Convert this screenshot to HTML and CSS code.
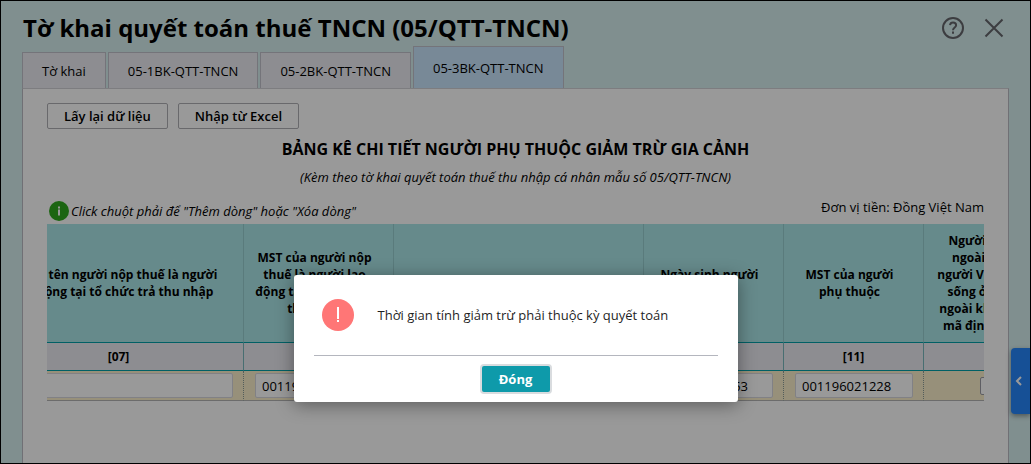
FILE: index.html
```html
<!DOCTYPE html>
<html lang="vi">
<head>
<meta charset="utf-8">
<meta name="viewport" content="width=device-width, initial-scale=1">
<title>Tờ khai quyết toán thuế TNCN</title>
<link rel="stylesheet" href="styles.css">
</head>
<body>
<div class="window">
  <header class="topbar">
    <h1 class="title">Tờ khai quyết toán thuế TNCN (05/QTT-TNCN)</h1>
    <div class="tools">
      <button class="icon-btn" type="button" aria-label="Trợ giúp">
        <svg width="24" height="24" viewBox="0 0 24 24" fill="none" stroke="currentColor" stroke-width="2"><circle cx="12" cy="12" r="10"/><path d="M9 9.200C9.300 7.300 10.500 6.600 12 6.600c1.800 0 3.100 1 3.100 2.600C15.100 11.400 12 11.500 12 14.200"/><path d="M12 15.600v2.200"/></svg>
      </button>
      <button class="icon-btn" type="button" aria-label="Đóng cửa sổ">
        <svg width="24" height="24" viewBox="0 0 24 24" fill="none" stroke="currentColor" stroke-width="2"><path d="M3.500 3.500l17 17M20.500 3.500l-17 17"/></svg>
      </button>
    </div>
  </header>

  <nav class="tabs">
    <button class="tab" type="button">Tờ khai</button>
    <button class="tab" type="button">05-1BK-QTT-TNCN</button>
    <button class="tab" type="button">05-2BK-QTT-TNCN</button>
    <button class="tab tab-active" type="button">05-3BK-QTT-TNCN</button>
  </nav>

  <main class="panel">
    <div class="actions">
      <button class="btn" type="button">Lấy lại dữ liệu</button>
      <button class="btn" type="button">Nhập từ Excel</button>
    </div>
    <h2 class="heading">BẢNG KÊ CHI TIẾT NGƯỜI PHỤ THUỘC GIẢM TRỪ GIA CẢNH</h2>
    <p class="subheading">(Kèm theo tờ khai quyết toán thuế thu nhập cá nhân mẫu số 05/QTT-TNCN)</p>
    <div class="notes">
      <p class="hint">
        <svg width="20" height="20" viewBox="0 0 20 20"><circle cx="10" cy="10" r="10" fill="#2fa81e"/><path d="M9 8.500h2v6H9zM9 5.500h2v2H9z" fill="#fff"/></svg>
        <span>Click chuột phải để "Thêm dòng" hoặc "Xóa dòng"</span>
      </p>
      <p class="unit">Đơn vị tiền: Đồng Việt Nam</p>
    </div>
    <div class="grid-clip">
      <table class="grid">
        <colgroup>
          <col class="col-name"><col class="col-tax"><col class="col-name"><col class="col-code"><col class="col-code"><col class="col-check">
        </colgroup>
        <thead>
          <tr>
            <th>Họ và tên người nộp thuế là người<br>lao động tại tổ chức trả thu nhập</th>
            <th>MST của người nộp<br>thuế là người lao<br>động tại tổ chức trả<br>thu nhập</th>
            <th></th>
            <th>Ngày sinh người<br>phụ</th>
            <th>MST của người<br>phụ thuộc</th>
            <th>Người nước<br>ngoài hoặc<br>người Việt Nam<br>sống ở nước<br>ngoài không có<br>mã định danh</th>
          </tr>
          <tr class="codes">
            <th>[07]</th><th>[08]</th><th>[09]</th><th>[10]</th><th>[11]</th><th></th>
          </tr>
        </thead>
        <tbody>
          <tr>
            <td><input class="cell" type="text" aria-label="Họ và tên người nộp thuế"></td>
            <td><input class="cell" type="text" value="001196021228" aria-label="MST của người nộp thuế"></td>
            <td><input class="cell" type="text" aria-label="Họ và tên người phụ thuộc"></td>
            <td><input class="cell cell-date" type="text" value="01/01/1953" aria-label="Ngày sinh người phụ thuộc"></td>
            <td><input class="cell" type="text" value="001196021228" aria-label="MST của người phụ thuộc"></td>
            <td><input class="check" type="checkbox" aria-label="Không có mã định danh"></td>
          </tr>
        </tbody>
      </table>
    </div>
  </main>

  <button class="drawer" type="button" aria-label="Mở bảng bên">
    <svg width="8" height="10" viewBox="0 0 8 10" fill="none" stroke="#fff" stroke-width="2"><path d="M6 1L2 5l4 4"/></svg>
  </button>

  <div class="overlay">
    <section class="dialog" role="alertdialog" aria-modal="true" aria-labelledby="message">
      <div class="dialog-body">
        <svg width="32" height="32" viewBox="0 0 32 32"><circle cx="16" cy="16" r="16" fill="#ff7676"/><path d="M15 8h2v12h-2zM15 21h2v2h-2z" fill="#fff"/></svg>
        <p id="message" class="message">Thời gian tính giảm trừ phải thuộc kỳ quyết toán</p>
      </div>
      <div class="dialog-footer">
        <button class="btn-primary" type="button">Đóng</button>
      </div>
    </section>
  </div>
</div>
</body>
</html>
```
FILE: styles.css
```css
* { box-sizing: border-box; }

body, h1, h2, p { margin: 0; }

body {
  font-family: "Open Sans", "Noto Sans", sans-serif;
  font-size: 13px;
  line-height: 18px;
  color: #000;
}

button, input { font: inherit; color: inherit; margin: 0; }

.window {
  position: relative;
  display: flex;
  flex-direction: column;
  min-height: 100vh;
  padding: 0 21px;
  border: 1px solid #000;
  background: #d6eeee;
  overflow: hidden;
}

.topbar {
  display: flex;
  align-items: center;
  justify-content: space-between;
  height: 45px;
  padding-top: 8px;
}

.title {
  padding-left: 1px;
  font-size: 24px;
  line-height: 36px;
  font-weight: 700;
  white-space: nowrap;
}

.tools { display: flex; gap: 17px; padding-right: 3px; }

.icon-btn {
  display: flex;
  padding: 0;
  border: 0;
  background: none;
  color: #65666c;
}

.tabs {
  display: flex;
  align-items: flex-end;
  gap: 2px;
}

.tab {
  height: 36px;
  padding: 0 19px;
  border: 1px solid #c2c2cb;
  border-bottom: 0;
  background: #ececf2;
}

.tab-active {
  height: 42px;
  background: #c8e4fc;
}

.panel {
  flex: 1;
  padding: 14px 24px 24px;
  border: 1px solid #bbbbc4;
  border-top-color: #d0d0d6;
  border-bottom: 0;
  background: #fff;
}

.actions { display: flex; gap: 10px; }

.btn {
  height: 26px;
  padding: 0 16px;
  border: 1px solid #afafb5;
  border-radius: 2px;
  background: #fff;
  font-weight: 600;
}

.heading {
  margin-top: 9px;
  font-size: 16px;
  line-height: 22px;
  font-weight: 700;
  text-align: center;
}

.subheading {
  margin-top: 8px;
  font-size: 13px;
  font-style: italic;
  text-align: center;
}

.notes {
  display: flex;
  justify-content: space-between;
  align-items: flex-start;
  margin-top: 12px;
}

.hint {
  display: flex;
  align-items: center;
  gap: 2px;
  padding: 3px 2px;
  font-style: italic;
}

.grid-clip { overflow: hidden; }

.grid {
  width: 1060px;
  margin-left: -53px;
  table-layout: fixed;
  border-collapse: separate;
  border-spacing: 0;
}

.col-name { width: 250px; }
.col-tax { width: 150px; }
.col-code { width: 140px; }
.col-check { width: 130px; }

.grid th {
  height: 119px;
  padding: 0 8px 0 0;
  border-right: 1px solid #96cdcf;
  border-bottom: 1px solid #00a0a8;
  background: #abe6e8;
  font-size: 12px;
  line-height: 17px;
  font-weight: 700;
  white-space: nowrap;
}

.grid .codes th {
  height: 28px;
  padding: 0;
  border-right-color: #78b8bc;
  background: #ececf2;
}

.grid td {
  height: 30px;
  padding: 0 10px 0 11px;
  border-right: 1px dotted #8a9c96;
  border-bottom: 1px solid #b4b4b4;
  background: #fcf0cb;
}

.cell {
  display: block;
  width: 100%;
  height: 25px;
  padding: 0 6px;
  border: 1px solid #d8d8de;
  border-radius: 2px;
  background: #fff;
}

.cell-date { padding-right: 24px; text-align: right; }

.check {
  appearance: none;
  display: block;
  width: 18px;
  height: 18px;
  margin: 0 auto;
  border: 1px solid #9d9da5;
  border-radius: 2px;
  background: #fff;
}

.drawer {
  position: absolute;
  right: 0;
  top: 347px;
  display: flex;
  align-items: center;
  width: 19px;
  height: 66px;
  padding: 0 4px;
  border: 0;
  border-radius: 4px 0 0 4px;
  background: #2585fa;
  box-shadow: 0 2px 5px rgba(0, 0, 0, 0.4);
}

.overlay {
  position: absolute;
  inset: 0;
  display: flex;
  justify-content: center;
  align-items: flex-start;
  padding-top: 274px;
  background: rgba(0, 0, 0, 0.4);
}

.dialog {
  width: 444px;
  max-width: 90%;
  padding: 24px 20px 8px;
  border-radius: 3px;
  background: #fff;
  box-shadow: 0 3px 18px rgba(0, 0, 0, 0.4);
}

.dialog-body {
  display: flex;
  align-items: center;
  gap: 24px;
  padding: 0 8px 24px;
  border-bottom: 1px solid #b4b6be;
}

.message { color: #1f1f1f; }

.dialog-footer {
  display: flex;
  justify-content: center;
  padding-top: 8px;
}

.btn-primary {
  min-width: 72px;
  height: 30px;
  padding: 0 16px;
  border: 2px solid #d9dcdf;
  border-radius: 4px;
  background: #0e9aaa;
  color: #fff;
  font-weight: 700;
}
```
